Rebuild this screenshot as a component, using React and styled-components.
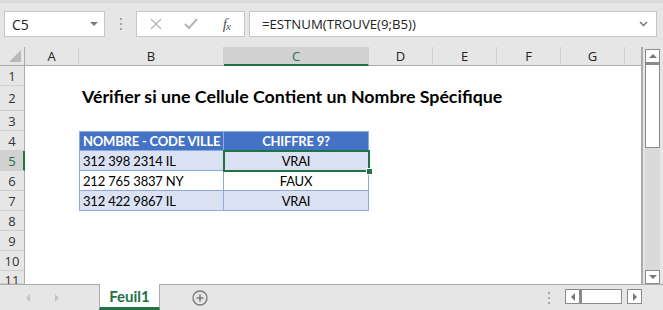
import React from "react";
import styled, { createGlobalStyle } from "styled-components";

const GREEN = "#217346";
const TITLE = "Vérifier si une Cellule Contient un Nombre Spécifique";

const COLS = [
  { key: "A", width: 54 },
  { key: "B", width: 145 },
  { key: "C", width: 145 },
  { key: "D", width: 64 },
  { key: "E", width: 64 },
  { key: "F", width: 64 },
  { key: "G", width: 64 },
];

const ROWS = [
  { n: 1, h: 20 },
  { n: 2, h: 25, cells: { B: { text: TITLE, kind: "title" } } },
  { n: 3, h: 20 },
  {
    n: 4,
    h: 20,
    cells: {
      B: { text: "NOMBRE - CODE VILLE", kind: "head", top: true, left: true },
      C: { text: "CHIFFRE 9?", kind: "head", top: true, center: true },
    },
  },
  {
    n: 5,
    h: 20,
    cells: {
      B: { text: "312 398 2314 IL", kind: "band", left: true },
      C: { text: "VRAI", kind: "band", center: true, selected: true },
    },
  },
  {
    n: 6,
    h: 20,
    cells: {
      B: { text: "212 765 3837 NY", kind: "plain", left: true },
      C: { text: "FAUX", kind: "plain", center: true },
    },
  },
  {
    n: 7,
    h: 20,
    cells: {
      B: { text: "312 422 9867 IL", kind: "band", left: true },
      C: { text: "VRAI", kind: "band", center: true },
    },
  },
  { n: 8, h: 20 },
  { n: 9, h: 20 },
  { n: 10, h: 20 },
  { n: 11, h: 13 },
];

const GlobalStyle = createGlobalStyle`
  html, body {
    margin: 0;
    padding: 0;
    background: #e6e6e6;
  }
  body {
    font-family: Lato, "Liberation Sans", sans-serif;
  }
`;

const App = () => {
  return (
    <>
      <GlobalStyle />
      <Window>
        <FormulaBar>
          <NameBox>
            <span>C5</span>
            <DropArrow />
          </NameBox>
          <Grip>
            <i />
            <i />
            <i />
          </Grip>
          <FxBox>
            <FxIcon>
              <svg width="12" height="12" viewBox="0 0 12 12">
                <path d="M1 1 L11 11 M11 1 L1 11" stroke="#b4b4b4" strokeWidth="1.4" fill="none" />
              </svg>
            </FxIcon>
            <FxIcon>
              <svg width="14" height="12" viewBox="0 0 14 12">
                <path d="M1 6 L5 10 L13 1" stroke="#b4b4b4" strokeWidth="2" fill="none" />
              </svg>
            </FxIcon>
            <FxIcon>
              <FxText>
                f<sub>x</sub>
              </FxText>
            </FxIcon>
          </FxBox>
          <FormulaInput>
            <span>=ESTNUM(TROUVE(9;B5))</span>
            <svg width="9" height="6" viewBox="0 0 9 6">
              <path d="M1 1 L4.5 4.5 L8 1" stroke="#777" strokeWidth="1.5" fill="none" />
            </svg>
          </FormulaInput>
        </FormulaBar>

        <Main>
          <SheetGrid>
            <Corner>
              <CornerTriangle />
            </Corner>
            {COLS.map((col) => (
              <ColHeader key={col.key} $selected={col.key === "C"}>
                {col.key}
              </ColHeader>
            ))}
            <ColFiller />
            {ROWS.map((row) => (
              <React.Fragment key={row.n}>
                <RowHeader $h={row.h} $selected={row.n === 5}>
                  {row.n}
                </RowHeader>
                {COLS.map((col) => {
                  const c = row.cells && row.cells[col.key];
                  return (
                    <Cell
                      key={col.key}
                      $kind={c ? c.kind : "empty"}
                      $top={c && c.top}
                      $left={c && c.left}
                      $center={c && c.center}
                      $selected={c && c.selected}
                    >
                      {c && <CellText $kind={c.kind}>{c.text}</CellText>}
                    </Cell>
                  );
                })}
                <Cell $kind="empty" />
              </React.Fragment>
            ))}
          </SheetGrid>
          <VScroll>
            <ScrollBtn>
              <Tri $dir="up" />
            </ScrollBtn>
            <VThumb />
            <VTrack />
            <ScrollBtn>
              <Tri $dir="down" />
            </ScrollBtn>
          </VScroll>
        </Main>

        <TabBar>
          <TabNav>
            <NavArrow $dir="left" />
            <NavArrow $dir="right" />
          </TabNav>
          <SheetTab>Feuil1</SheetTab>
          <AddSheet>
            <svg width="16" height="16" viewBox="0 0 16 16">
              <circle cx="8" cy="8" r="7" stroke="#7a7a7a" strokeWidth="1.3" fill="none" />
              <path d="M8 4.5 V11.5 M4.5 8 H11.5" stroke="#7a7a7a" strokeWidth="1.6" />
            </svg>
          </AddSheet>
          <Spacer />
          <Grip $small>
            <i />
            <i />
            <i />
          </Grip>
          <HScroll>
            <ScrollBtn $h>
              <Tri $dir="left" />
            </ScrollBtn>
            <HThumb />
            <ScrollBtn $h $gap>
              <Tri $dir="right" />
            </ScrollBtn>
          </HScroll>
        </TabBar>
      </Window>
    </>
  );
};

export default App;

const Window = styled.div`
  width: 663px;
  height: 310px;
  display: flex;
  flex-direction: column;
  background: #e6e6e6;
  overflow: hidden;
`;

const FormulaBar = styled.div`
  height: 47px;
  box-sizing: border-box;
  padding: 8px 6px 0 4px;
  display: flex;
  align-items: flex-start;
  border-top: 3px solid #dadada;
`;

const NameBox = styled.div`
  width: 101px;
  height: 26px;
  box-sizing: border-box;
  background: #fff;
  border: 1px solid #c6c6c6;
  display: flex;
  align-items: center;
  justify-content: space-between;
  padding: 0 6px 0 7px;
  font-family: "Open Sans", "Noto Sans", sans-serif;
  font-size: 14px;
  color: #222;
`;

const DropArrow = styled.span`
  width: 0;
  height: 0;
  border-left: 4px solid transparent;
  border-right: 4px solid transparent;
  border-top: 4px solid #7a7a7a;
`;

const Grip = styled.div`
  width: ${(p) => (p.$small ? "8px" : "31px")};
  display: flex;
  flex-direction: column;
  align-items: center;
  justify-content: center;
  gap: 3px;
  padding-top: ${(p) => (p.$small ? "0" : "7px")};
  margin-right: ${(p) => (p.$small ? "12px" : "0")};

  i {
    display: block;
    width: 2px;
    height: 2px;
    background: #a6a6a6;
  }
`;

const FxBox = styled.div`
  width: 109px;
  height: 26px;
  box-sizing: border-box;
  background: #fff;
  border: 1px solid #c6c6c6;
  display: flex;
  align-items: center;
  padding-left: 1px;
  margin-right: 4px;
`;

const FxIcon = styled.span`
  width: 36px;
  display: flex;
  justify-content: center;
  align-items: center;
`;

const FxText = styled.span`
  font-family: "Liberation Serif", serif;
  font-style: italic;
  font-size: 15px;
  color: #555;
  letter-spacing: -1px;

  sub {
    font-size: 11px;
    vertical-align: -1px;
  }
`;

const FormulaInput = styled.div`
  flex: 1;
  height: 26px;
  box-sizing: border-box;
  background: #fff;
  border: 1px solid #c6c6c6;
  display: flex;
  align-items: center;
  justify-content: space-between;
  padding: 0 8px 0 12px;
  font-family: "Open Sans", "Noto Sans", sans-serif;
  font-size: 13.2px;
  color: #222;
`;

const Main = styled.div`
  height: 237px;
  display: flex;
`;

const SheetGrid = styled.div`
  width: 641px;
  display: grid;
  grid-template-columns: 25px ${COLS.map((c) => `${c.width}px`).join(" ")} 16px;
  grid-template-rows: 19px ${ROWS.map((r) => `${r.h}px`).join(" ")};
  background: #fff;
  border-right: 2px solid #ababab;
  overflow: hidden;
`;

const Corner = styled.div`
  background: #e6e6e6;
  border-right: 1px solid #ababab;
  border-bottom: 1px solid #ababab;
  box-sizing: border-box;
  position: relative;
`;

const CornerTriangle = styled.span`
  position: absolute;
  right: 3px;
  bottom: 3px;
  width: 0;
  height: 0;
  border-left: 12px solid transparent;
  border-bottom: 12px solid #b9b9b9;
`;

const ColHeader = styled.div`
  background: ${(p) => (p.$selected ? "#d2d2d2" : "#e6e6e6")};
  border-right: 1px solid #d0d0d0;
  border-bottom: ${(p) => (p.$selected ? `2px solid ${GREEN}` : "1px solid #ababab")};
  box-sizing: border-box;
  display: flex;
  align-items: center;
  justify-content: center;
  font-family: "Open Sans", "Noto Sans", sans-serif;
  font-size: 13px;
  color: ${(p) => (p.$selected ? GREEN : "#222")};
  padding-top: ${(p) => (p.$selected ? "1px" : "0")};
`;

const ColFiller = styled.div`
  background: #e6e6e6;
  border-bottom: 1px solid #ababab;
`;

const RowHeader = styled.div`
  background: ${(p) => (p.$selected ? "#d2d2d2" : "#e6e6e6")};
  border-right: ${(p) => (p.$selected ? `2px solid ${GREEN}` : "1px solid #ababab")};
  border-bottom: 1px solid #d0d0d0;
  box-sizing: border-box;
  display: flex;
  align-items: ${(p) => (p.$h < 20 ? "flex-start" : "center")};
  justify-content: center;
  font-family: "Open Sans", "Noto Sans", sans-serif;
  font-size: 13px;
  color: ${(p) => (p.$selected ? GREEN : "#333")};
  padding-left: ${(p) => (p.$selected ? "1px" : "0")};
`;

const FILL = {
  head: "#4472c4",
  band: "#d9e1f2",
  plain: "#fff",
  title: "transparent",
  empty: "transparent",
};

const Cell = styled.div`
  position: relative;
  box-sizing: border-box;
  background: ${(p) => FILL[p.$kind]};
  display: flex;
  align-items: flex-end;
  justify-content: ${(p) => (p.$center ? "center" : "flex-start")};
  padding: 0 3px 2px;
  white-space: nowrap;
  overflow: visible;
  z-index: ${(p) => (p.$selected || p.$kind === "title" ? 2 : 1)};
  ${(p) =>
    ["head", "band", "plain"].includes(p.$kind) &&
    `
    border-right: 1px solid #8ea9db;
    border-bottom: 1px solid #8ea9db;
  `}
  ${(p) => p.$top && "border-top: 1px solid #8ea9db;"}
  ${(p) => p.$left && "border-left: 1px solid #8ea9db;"}

  ${(p) =>
    p.$selected &&
    `
    &::after {
      content: "";
      position: absolute;
      left: -1px;
      top: -1px;
      right: -2px;
      bottom: -2px;
      border: 2px solid ${GREEN};
    }
    &::before {
      content: "";
      position: absolute;
      right: -5px;
      bottom: -5px;
      width: 5px;
      height: 5px;
      background: ${GREEN};
      border: 1px solid #fff;
      z-index: 3;
    }
  `}
`;

const CellText = styled.span`
  font-family: Lato, "Liberation Sans", sans-serif;
  font-size: ${(p) => (p.$kind === "title" ? "17.8px" : "13px")};
  font-weight: ${(p) => (p.$kind === "title" || p.$kind === "head" ? 700 : 400)};
  color: ${(p) => (p.$kind === "head" ? "#fff" : "#000")};
  letter-spacing: ${(p) => (p.$kind === "title" ? "0" : "-0.2px")};
  line-height: 1;
  padding-bottom: ${(p) => (p.$kind === "title" ? "3px" : "0")};
`;

const VScroll = styled.div`
  width: 20px;
  display: flex;
  flex-direction: column;
  padding: 2px 3px 0 2px;
  box-sizing: border-box;
`;

const ScrollBtn = styled.div`
  width: 15px;
  height: ${(p) => (p.$h ? "15px" : "14px")};
  box-sizing: border-box;
  background: #fff;
  border: 1px solid #8a8a8a;
  display: flex;
  align-items: center;
  justify-content: center;
  flex-shrink: 0;
  margin-left: ${(p) => (p.$gap ? "5px" : "0")};
`;

const VThumb = styled.div`
  height: 85px;
  background: #fff;
  border: 1px solid #8a8a8a;
  border-top: 2px solid #8a8a8a;
  box-sizing: border-box;
`;

const VTrack = styled.div`
  flex: 1;
  background: #dadada;
`;

const Tri = styled.span`
  width: 0;
  height: 0;
  ${(p) =>
    p.$dir === "up"
      ? "border-left: 4px solid transparent; border-right: 4px solid transparent; border-bottom: 4px solid #777;"
      : p.$dir === "down"
      ? "border-left: 4px solid transparent; border-right: 4px solid transparent; border-top: 4px solid #777;"
      : p.$dir === "left"
      ? "border-top: 4px solid transparent; border-bottom: 4px solid transparent; border-right: 4px solid #777;"
      : "border-top: 4px solid transparent; border-bottom: 4px solid transparent; border-left: 4px solid #777;"}
`;

const TabBar = styled.div`
  flex: 1;
  display: flex;
  align-items: stretch;
  border-top: 1px solid #ababab;
`;

const TabNav = styled.div`
  width: 99px;
  display: flex;
  align-items: center;
  padding-left: 26px;
  gap: 25px;
  box-sizing: border-box;
`;

const NavArrow = styled.span`
  width: 0;
  height: 0;
  border-top: 4px solid transparent;
  border-bottom: 4px solid transparent;
  ${(p) =>
    p.$dir === "left"
      ? "border-right: 4px solid #c4c4c4;"
      : "border-left: 4px solid #c4c4c4;"}
`;

const SheetTab = styled.div`
  width: 61px;
  margin-top: -1px;
  box-sizing: border-box;
  background: #fff;
  border-left: 1px solid #ababab;
  border-right: 1px solid #ababab;
  border-bottom: 3px solid ${GREEN};
  display: flex;
  align-items: center;
  justify-content: center;
  font-family: Lato, "Liberation Sans", sans-serif;
  font-weight: 700;
  font-size: 15px;
  color: ${GREEN};
  padding-top: 1px;
`;

const AddSheet = styled.div`
  width: 80px;
  display: flex;
  align-items: center;
  justify-content: center;
`;

const Spacer = styled.div`
  flex: 1;
`;

const HScroll = styled.div`
  display: flex;
  align-items: center;
  padding-right: 21px;
  padding-bottom: 2px;
`;

const HThumb = styled.div`
  width: 42px;
  height: 15px;
  box-sizing: border-box;
  background: #fff;
  border: 1px solid #8a8a8a;
  border-left: 2px solid #8a8a8a;
`;
